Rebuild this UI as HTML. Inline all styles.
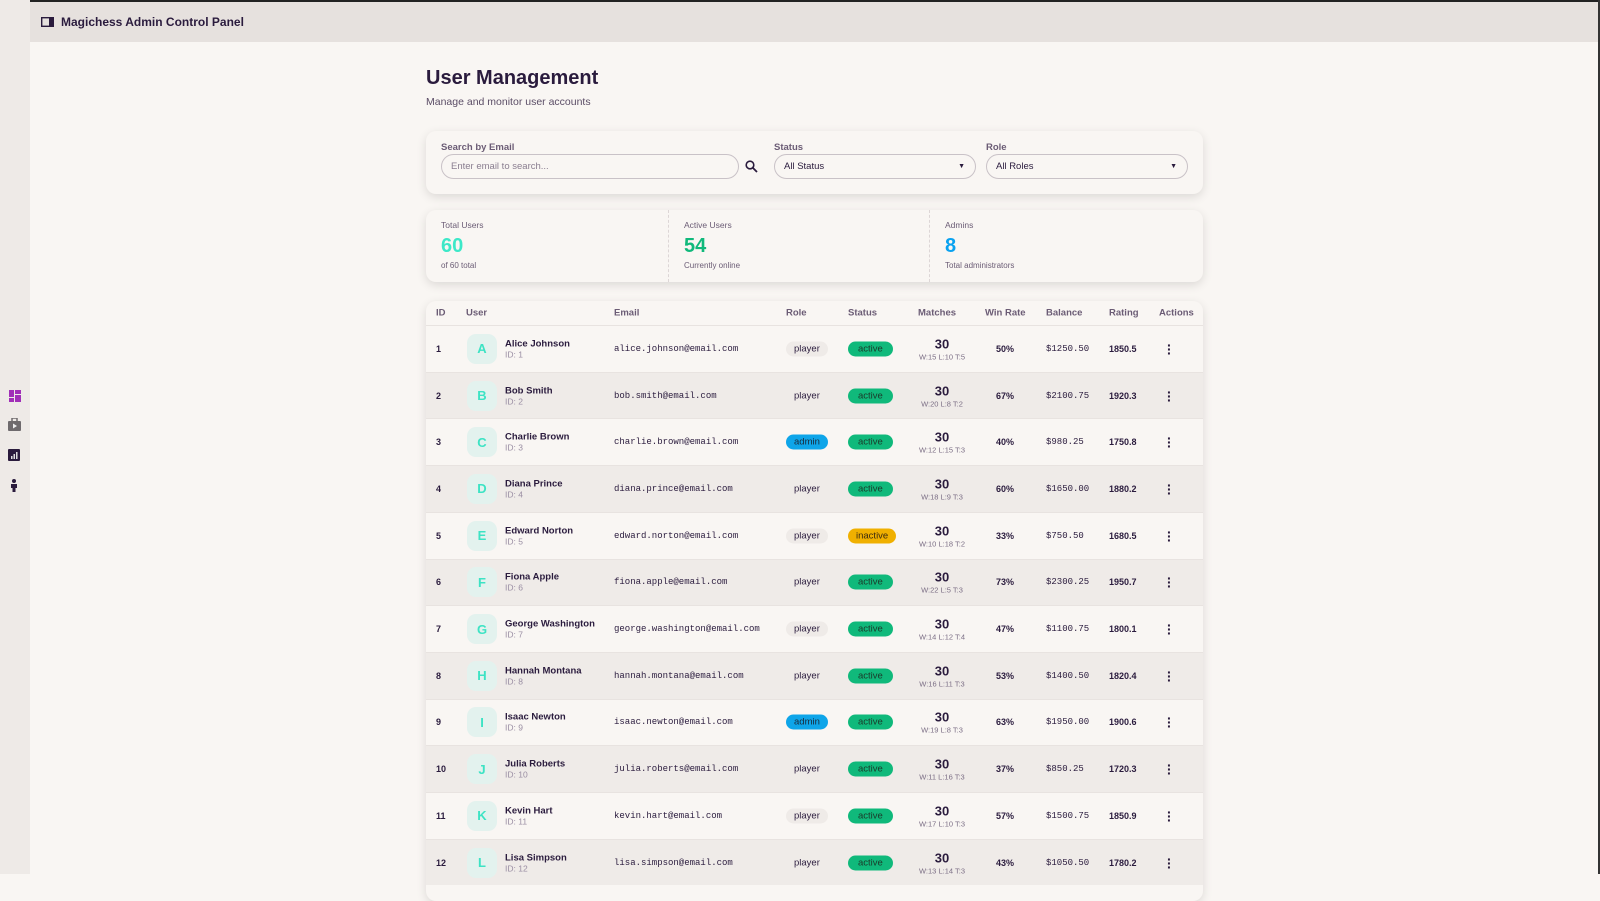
<!DOCTYPE html>
<html><head><meta charset="utf-8"><style>
*{box-sizing:border-box;margin:0;padding:0}
body{width:1600px;height:874px;overflow:hidden;background:#f9f6f3;font-family:"Liberation Sans","Noto Sans CJK SC",sans-serif;color:#2a1b3d;position:relative}
.top{position:absolute;left:0;top:0;width:1600px;height:2px;background:#222}
.side{position:absolute;left:0;top:0;width:30px;height:874px;background:#eeeae7}
.hdr{position:absolute;left:30px;top:2px;width:1568px;height:40px;background:#e6e1de;display:flex;align-items:center;padding-left:11px;font-weight:bold;font-size:12px}
.rb{position:absolute;right:0;top:0;width:2px;height:874px;background:#333}
.wrap{position:absolute;left:426px;width:777px}
h1{font-size:20px;font-weight:bold;position:absolute;left:426px;top:67px}
.sub{position:absolute;left:426px;top:96px;font-size:10.5px;color:#5b4d66}
.card{background:#f9f6f3;border-radius:10px;box-shadow:0 3px 10px rgba(0,0,0,.12)}
.lbl{font-size:9.5px;font-weight:bold;color:#6b5c75;position:absolute}
.inp{position:absolute;height:25px;border:1px solid #c9c2c7;border-radius:13px;font-size:9.5px;display:flex;align-items:center;padding-left:9px}
.stat{position:absolute;top:0;height:72px;padding:10px 15px}
.stat .t{font-size:8.5px;color:#6b5c75}
.stat .n{font-size:20px;font-weight:bold;margin-top:5px}
.stat .s{font-size:8px;color:#6b5c75;margin-top:3px}
.row{position:absolute;left:0;width:777px;height:46.7px;font-size:9px;border-top:1px solid #e8e3e0}
.row>*{position:absolute;top:50%;transform:translateY(-50%)}
.hrow{font-weight:bold;color:#6b5c75;font-size:9.5px}
.av{width:30px;height:30px;border-radius:9px;background:#e3f2ee;color:#3de3c4;font-size:13px;font-weight:bold;display:flex;align-items:center;justify-content:center;left:41px}
.nm b{display:block;font-size:9.5px}
.nm span{font-size:8.5px;color:#9a8ea3}
.em{font-family:"Liberation Mono",monospace;font-size:9px;left:188px}
.pill{border-radius:9px;padding:2px 8px;font-size:9.5px}
.mt{text-align:center;left:486px;width:60px}
.mt b{display:block;font-size:13px}
.mt span{font-size:7.5px;color:#7b6e85}
.dots{left:741px;font-size:14px;font-weight:bold;line-height:4px}
</style></head><body>
<div class="top"></div><div class="rb"></div>
<div class="side">
<svg style="position:absolute;left:9px;top:390px" width="12" height="12"><rect x="0" y="0" width="5" height="7" fill="#a12fb8"/><rect x="6" y="0" width="6" height="4" fill="#a12fb8"/><rect x="0" y="8" width="5" height="4" fill="#a12fb8"/><rect x="6" y="5" width="6" height="7" fill="#a12fb8"/></svg>
<svg style="position:absolute;left:8px;top:418px" width="13" height="13"><rect x="0" y="3" width="13" height="10" rx="1" fill="#6e6a6d"/><rect x="4" y="0" width="5" height="4" fill="none" stroke="#6e6a6d" stroke-width="1.5"/><path d="M5 5.5L9 8L5 10.5Z" fill="#eee"/></svg>
<svg style="position:absolute;left:8px;top:449px" width="12" height="12"><rect width="12" height="12" rx="1" fill="#2a1b3d"/><rect x="3" y="7" width="1.5" height="3" fill="#ddd"/><rect x="5.5" y="5" width="1.5" height="5" fill="#ddd"/><rect x="8" y="3" width="1.5" height="7" fill="#ddd"/></svg>
<svg style="position:absolute;left:11px;top:479px" width="6" height="13"><circle cx="3" cy="2" r="2" fill="#2a1b3d"/><path d="M0 5h6v4h-1.5v4h-3v-4H0z" fill="#2a1b3d"/></svg>
</div>
<div class="hdr"><svg width="13" height="10" style="margin-right:7px"><rect x="0.7" y="0.7" width="11.6" height="8.6" fill="none" stroke="#2a1b3d" stroke-width="1.4"/><rect x="8" y="1" width="4" height="8" fill="#2a1b3d"/></svg>Magichess Admin Control Panel</div>
<h1>User Management</h1>
<div class="sub">Manage and monitor user accounts</div>
<div class="wrap card" style="top:131px;height:63px">
<div class="lbl" style="left:15px;top:11px">Search by Email</div>
<div class="inp" style="left:15px;top:23px;width:298px;color:#8a7e90">Enter email to search...</div>
<svg style="position:absolute;left:319px;top:29px" width="13" height="13"><circle cx="5" cy="5" r="3.8" fill="none" stroke="#2a1b3d" stroke-width="1.6"/><path d="M8 8l4 4" stroke="#2a1b3d" stroke-width="1.8"/></svg>
<div class="lbl" style="left:348px;top:11px">Status</div>
<div class="inp" style="left:348px;top:23px;width:202px">All Status<span style="position:absolute;right:10px;font-size:7px">▼</span></div>
<div class="lbl" style="left:560px;top:11px">Role</div>
<div class="inp" style="left:560px;top:23px;width:202px">All Roles<span style="position:absolute;right:10px;font-size:7px">▼</span></div>
</div>
<div class="wrap card" style="top:210px;height:72px">
<div class="stat" style="left:0;width:243px;border-right:1px dashed #ddd6d6"><div class="t">Total Users</div><div class="n" style="color:#3de8c8">60</div><div class="s">of 60 total</div></div>
<div class="stat" style="left:243px;width:261px;border-right:1px dashed #ddd6d6"><div class="t">Active Users</div><div class="n" style="color:#10b97b">54</div><div class="s">Currently online</div></div>
<div class="stat" style="left:504px;width:260px"><div class="t">Admins</div><div class="n" style="color:#0aa2f0">8</div><div class="s">Total administrators</div></div>
</div>
<div class="wrap card" style="top:301px;height:600px;overflow:hidden">
<div class="row hrow" style="top:0;height:24px;border:none">
<span style="left:10px">ID</span><span style="left:40px">User</span><span style="left:188px">Email</span><span style="left:360px">Role</span><span style="left:422px">Status</span><span style="left:492px">Matches</span><span style="left:559px">Win Rate</span><span style="left:620px">Balance</span><span style="left:683px">Rating</span><span style="left:733px">Actions</span>
</div>
<div id="rows"></div>
</div>
<script>
const d=[["Alice Johnson","alice.johnson","player","active","W:15 L:10 T:5","50%","$1250.50","1850.5"],
["Bob Smith","bob.smith","player","active","W:20 L:8 T:2","67%","$2100.75","1920.3"],
["Charlie Brown","charlie.brown","admin","active","W:12 L:15 T:3","40%","$980.25","1750.8"],
["Diana Prince","diana.prince","player","active","W:18 L:9 T:3","60%","$1650.00","1880.2"],
["Edward Norton","edward.norton","player","inactive","W:10 L:18 T:2","33%","$750.50","1680.5"],
["Fiona Apple","fiona.apple","player","active","W:22 L:5 T:3","73%","$2300.25","1950.7"],
["George Washington","george.washington","player","active","W:14 L:12 T:4","47%","$1100.75","1800.1"],
["Hannah Montana","hannah.montana","player","active","W:16 L:11 T:3","53%","$1400.50","1820.4"],
["Isaac Newton","isaac.newton","admin","active","W:19 L:8 T:3","63%","$1950.00","1900.6"],
["Julia Roberts","julia.roberts","player","active","W:11 L:16 T:3","37%","$850.25","1720.3"],
["Kevin Hart","kevin.hart","player","active","W:17 L:10 T:3","57%","$1500.75","1850.9"],
["Lisa Simpson","lisa.simpson","player","active","W:13 L:14 T:3","43%","$1050.50","1780.2"]];
let h="";d.forEach((r,i)=>{const bg=i%2?"#efebe8":"#f9f6f3";
const role=r[2]=="admin"?'<span class="pill" style="left:360px;background:#0ea5e9;color:#1a2a3a">admin</span>':'<span class="pill" style="left:360px;background:#efebe8;color:#2a1b3d">player</span>';
const st=r[3]=="active"?'<span class="pill" style="left:422px;background:#10b97b;color:#1b3a2a;padding:2px 10px">active</span>':'<span class="pill" style="left:422px;background:#f0b000;color:#3a2a10">inactive</span>';
h+=`<div class="row" style="top:${24+i*46.7}px;background:${bg}"><b style="left:10px">${i+1}</b><div class="av">${r[0][0]}</div><div class="nm" style="left:79px"><b>${r[0]}</b><span>ID: ${i+1}</span></div><span class="em">${r[1]}@email.com</span>${role}${st}<div class="mt"><b>30</b><span>${r[4]}</span></div><b style="left:570px">${r[5]}</b><span class="em" style="left:620px">${r[6]}</span><b style="left:683px">${r[7]}</b><div class="dots">·<br>·<br>·</div></div>`});
document.getElementById("rows").innerHTML=h;
</script>
</body></html>
